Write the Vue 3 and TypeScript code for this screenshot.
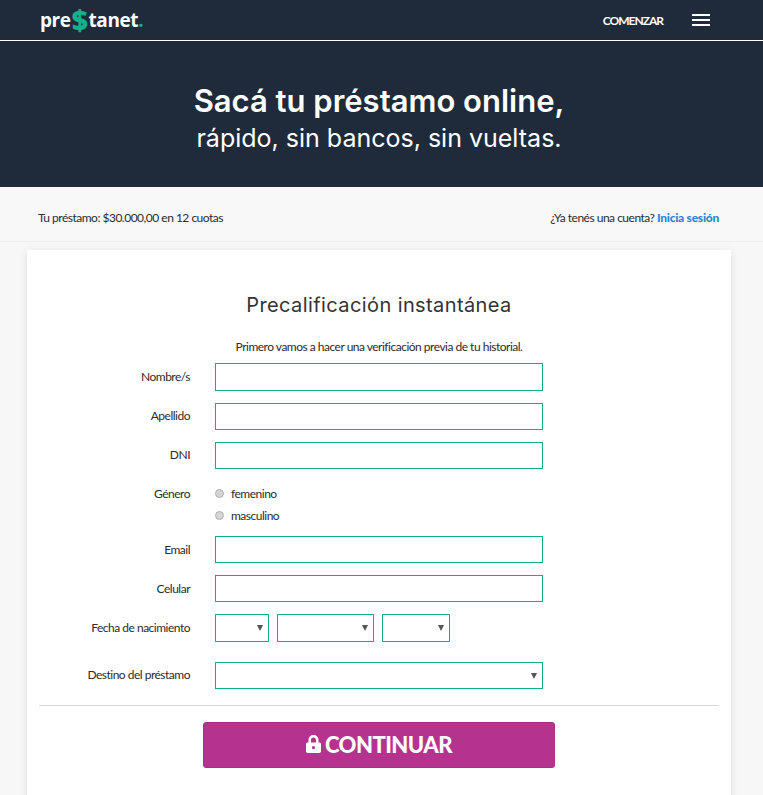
<template>
  <div class="page">
    <header class="topbar">
      <div class="logo">pre<span class="dollar">$</span>tanet<span class="dot">.</span></div>
      <nav class="nav">
        <a class="start">COMENZAR</a>
        <svg class="burger" width="18" height="12" viewBox="0 0 18 12"><path d="M0 1h18M0 6h18M0 11h18" stroke="#fff" stroke-width="2" /></svg>
      </nav>
    </header>

    <section class="hero">
      <h1>Sacá tu préstamo online,</h1>
      <h2>rápido, sin bancos, sin vueltas.</h2>
    </section>

    <div class="summary">
      <span>Tu préstamo: $30.000,00 en 12 cuotas</span>
      <span>¿Ya tenés una cuenta? <a class="login">Inicia sesión</a></span>
    </div>

    <main class="card">
      <h3>Precalificación instantánea</h3>
      <p class="lead">Primero vamos a hacer una verificación previa de tu historial.</p>

      <form class="form" @submit.prevent>
        <div class="row" v-for="f in topFields" :key="f"><label>{{ f }}</label><input type="text" /></div>

        <div class="row gender">
          <label>Género</label>
          <div class="radios">
            <div class="radio"><input type="radio" name="g" /><span>femenino</span></div>
            <div class="radio"><input type="radio" name="g" /><span>masculino</span></div>
          </div>
        </div>

        <div class="row contact" v-for="f in contactFields" :key="f"><label>{{ f }}</label><input type="text" /></div>

        <div class="row">
          <label>Fecha de nacimiento</label>
          <div class="dates">
            <div class="sel day"><select></select></div>
            <div class="sel month"><select></select></div>
            <div class="sel year"><select></select></div>
          </div>
        </div>

        <div class="row purpose">
          <label>Destino del préstamo</label>
          <div class="sel wide"><select></select></div>
        </div>

        <hr />

        <button class="submit" type="submit">
          <svg width="15" height="18" viewBox="0 0 15 18"><path fill="#fff" fill-rule="evenodd" d="M7.500 0C4.600 0 2.500 2.100 2.500 5v2.500H1.700C.8 7.500 0 8.200 0 9.200v7.100C0 17.300.8 18 1.700 18h11.600c.9 0 1.700-.7 1.700-1.700V9.200c0-1-.8-1.700-1.700-1.700h-.8V5c0-2.900-2.100-5-5-5zM5 7.500V5c0-1.500 1-2.500 2.500-2.500S10 3.500 10 5v2.500H5zM7.500 11a1.600 1.600 0 1 1 0 3.200 1.600 1.600 0 0 1 0-3.200z" /></svg>
          CONTINUAR
        </button>
      </form>
    </main>
  </div>
</template>

<script setup lang="ts">
const topFields: string[] = ['Nombre/s', 'Apellido', 'DNI']
const contactFields: string[] = ['Email', 'Celular']
</script>

<style>
html, body { margin: 0; height: 795px; overflow: hidden; background: #f7f7f7; }
</style>

<style scoped>
.page { font-family: Lato, "Liberation Sans", sans-serif; color: #2c2c2c; font-size: 12px; letter-spacing: -0.5px; }

.topbar { height: 41px; box-sizing: border-box; background: #1f2b3a; border-bottom: 1px solid #fff; display: flex; justify-content: space-between; align-items: center; padding: 0 53px 0 40px; }
.logo { font-family: "Open Sans", sans-serif; font-weight: 700; font-size: 19px; color: #fff; letter-spacing: -0.4px; display: flex; align-items: center; height: 36px; }
.dollar { color: #11b08f; font-size: 28px; font-weight: 800; line-height: 36px; margin: 0 1px; }
.dot { color: #11b08f; }
.nav { display: flex; align-items: center; gap: 29px; }
.start { color: #fff; font-size: 12px; font-weight: 700; letter-spacing: -1px; }
.burger { display: block; }

.hero { height: 146px; background: #1f2b3a; color: #fff; text-align: center; padding: 40px 5px 0 0; box-sizing: border-box; letter-spacing: 0; }
.hero h1 { margin: 0; font-family: Inter, sans-serif; font-size: 31px; line-height: 40px; font-weight: 600; }
.hero h2 { margin: 0; font-family: Inter, sans-serif; font-size: 25px; line-height: 34px; font-weight: 400; }

.summary { height: 55px; box-sizing: border-box; border-bottom: 1px solid #ececec; background: #f8f8f8; padding: 7px 44px 0 38px; display: flex; justify-content: space-between; align-items: center; }
.login { color: #2a86d8; font-weight: 900; letter-spacing: -0.25px; }

.card { width: 704px; height: 600px; margin: 8px 0 0 27px; background: #fff; box-shadow: 0 2px 8px rgba(0, 0, 0, .1); padding-top: 42px; box-sizing: border-box; }
h3 { margin: 0; text-align: center; font-family: Inter, sans-serif; font-size: 20px; line-height: 26px; font-weight: 400; letter-spacing: .4px; color: #333; }
.lead { margin: 20px 0 0; height: 17px; text-align: center; line-height: 17px; }

.form { display: flex; flex-direction: column; gap: 12px; padding: 8px 12px 0; }
.row { display: flex; align-items: center; }
.row label { width: 151px; text-align: right; margin-right: 25px; padding-bottom: 2px; flex: none; }
.row.contact label { padding-bottom: 0; }
input[type=text] { width: 328px; height: 27px; box-sizing: border-box; border: 1px solid #11ac8c; background: #fff; margin: 0; padding: 0; }
.row:first-child input[type=text] { height: 28px; }

.gender { align-items: flex-start; height: 43px; padding-top: 4px; box-sizing: border-box; }
.gender label { line-height: 17px; padding-bottom: 0; }
.radios { display: flex; flex-direction: column; gap: 5px; }
.radio { display: flex; align-items: center; gap: 7px; height: 17px; }
.radio input { appearance: none; margin: 0; width: 9px; height: 9px; border-radius: 50%; background: #d4d4d4; border: 1px solid #b0b0b0; box-sizing: border-box; }

.dates { display: flex; gap: 8px; }
.sel { position: relative; height: 28px; }
.sel::after { content: ""; position: absolute; right: 6px; top: 11px; border-left: 3.5px solid transparent; border-right: 3.5px solid transparent; border-top: 6px solid #555; pointer-events: none; }
select { appearance: none; display: block; width: 100%; height: 100%; box-sizing: border-box; border: 1px solid #11ac8c; background: #fff; border-radius: 0; margin: 0; }
.day { width: 54px; }
.month { width: 97px; }
.year { width: 68px; }
.wide { width: 328px; height: 27px; }
.purpose { margin-top: 8px; }

hr { width: 680px; margin: 4px 0; border: 0; border-top: 1px solid #d8d8d8; }
.submit { align-self: flex-start; margin-left: 164px; width: 352px; height: 46px; background: #b5338f; border: 1px solid #a82d84; border-radius: 3px; color: #fff; font-family: Lato, sans-serif; font-size: 22px; font-weight: 900; letter-spacing: -0.5px; display: flex; align-items: center; justify-content: center; gap: 4px; padding: 0 0 2px; }
</style>
